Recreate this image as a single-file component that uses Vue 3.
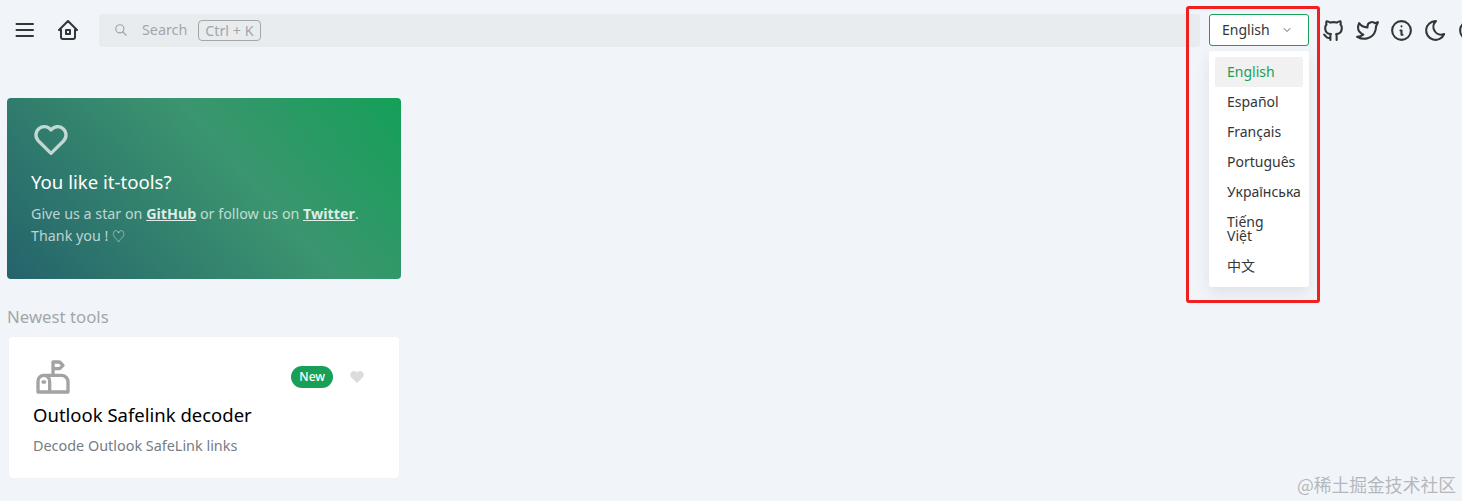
<script setup>
const languages = ["English", "Español", "Français", "Português", "Українська", "Tiếng Việt", "中文"];
</script>

<template>
  <div class="page">
    <header class="topbar">
      <button class="icon-btn">
        <svg width="24" height="24" viewBox="0 0 24 24" class="ico"><path d="M3.5 6h16.5M3.5 12h16.5M3.5 18h16.5" /></svg>
      </button>
      <button class="icon-btn">
        <svg width="24" height="24" viewBox="0 0 24 24" class="ico">
          <path d="M5 12l-2 0l9 -9l9 9l-2 0" />
          <path d="M5 12v7a2 2 0 0 0 2 2h10a2 2 0 0 0 2 -2v-7" />
          <path d="M10 12h4v4h-4z" />
        </svg>
      </button>
      <div class="search">
        <svg width="14" height="14" viewBox="0 0 24 24" class="ico search-ico"><circle cx="10" cy="10" r="7" /><path d="M21 21l-6 -6" /></svg>
        <span class="search-text">Search</span>
        <span class="kbd">Ctrl + K</span>
      </div>
      <div class="lang">
        <span>English</span>
        <svg width="12" height="12" viewBox="0 0 24 24" class="ico chevron"><path d="M6 9l6 6l6 -6" /></svg>
      </div>
      <div class="actions">
        <svg width="25" height="25" viewBox="0 0 24 24" class="ico">
          <path d="M9 19c-4.3 1.4 -4.3 -2.5 -6 -3m12 5v-3.5c0 -1 .1 -1.4 -.5 -2c2.8 -.3 5.5 -1.4 5.5 -6a4.6 4.6 0 0 0 -1.3 -3.2a4.2 4.2 0 0 0 -.1 -3.2s-1.1 -.3 -3.5 1.3a12.3 12.3 0 0 0 -6.2 0c-2.4 -1.6 -3.5 -1.3 -3.5 -1.3a4.2 4.2 0 0 0 -.1 3.2a4.6 4.6 0 0 0 -1.3 3.2c0 4.6 2.7 5.7 5.5 6c-.6 .6 -.6 1.2 -.5 2v3.5" />
        </svg>
        <svg width="25" height="25" viewBox="0 0 24 24" class="ico">
          <path d="M22 4.01c-1 .49 -1.98 .689 -3 .99c-1.121 -1.265 -2.783 -1.335 -4.38 -.737s-2.643 2.06 -2.62 3.737v1c-3.245 .083 -6.135 -1.395 -8 -4c0 0 -4.182 7.433 4 11c-1.872 1.247 -3.739 2.088 -6 2c3.308 1.803 6.913 2.423 10.034 1.517c3.58 -1.04 6.522 -3.723 7.651 -7.742a13.84 13.84 0 0 0 .497 -3.753c-.002 -.249 1.51 -2.772 1.818 -4.013z" />
        </svg>
        <svg width="25" height="25" viewBox="0 0 24 24" class="ico">
          <circle cx="12" cy="12" r="9" />
          <path d="M12 8h.01M11 12h1v4h1" />
        </svg>
        <svg width="25" height="25" viewBox="0 0 24 24" class="ico">
          <path d="M12 3c.132 0 .263 0 .393 0a7.5 7.5 0 0 0 7.92 12.446a9 9 0 1 1 -8.313 -12.454z" />
        </svg>
        <svg width="25" height="25" viewBox="0 0 24 24" class="ico">
          <circle cx="12" cy="12" r="9" />
        </svg>
      </div>
    </header>

    <main class="content">
      <section class="hero">
        <svg width="40" height="40" viewBox="0 0 24 24" class="hero-heart">
          <path d="M19.5 12.572l-7.5 7.428l-7.5 -7.428a5 5 0 1 1 7.5 -6.566a5 5 0 1 1 7.5 6.572" />
        </svg>
        <h2>You like it-tools?</h2>
        <p>
          Give us a star on <a>GitHub</a> or follow us on <a>Twitter</a>.<br />
          Thank you ! <span class="small-heart">♡</span>
        </p>
      </section>

      <h3 class="section-title">Newest tools</h3>

      <article class="tool">
        <div class="tool-top">
          <svg width="40" height="40" viewBox="0 0 24 24" class="mailbox">
            <path d="M10 21v-6.5a3.5 3.5 0 0 0 -7 0v6.5h18v-6a4 4 0 0 0 -4 -4h-10.5" />
            <path d="M12 11v-8h4l2 2l-2 2h-4" />
            <path d="M6 15h1" />
          </svg>
          <span class="badge">New</span>
          <svg width="18" height="18" viewBox="0 0 24 24" class="fav">
            <path d="M19.5 12.572l-7.5 7.428l-7.5 -7.428a5 5 0 1 1 7.5 -6.566a5 5 0 1 1 7.5 6.572" />
          </svg>
        </div>
        <div class="tool-name">Outlook Safelink decoder</div>
        <div class="tool-desc">Decode Outlook SafeLink links</div>
      </article>
    </main>

    <ul class="menu">
      <li v-for="(lang, i) in languages" :key="lang" :class="{ active: i === 0 }">{{ lang }}</li>
    </ul>
    <div class="red-box"></div>
    <div class="watermark">@稀土掘金技术社区</div>
  </div>
</template>

<style scoped>
.page {
  position: relative;
  width: 1462px;
  height: 501px;
  overflow: hidden;
  background: #f1f5f9;
  font-family: "Noto Sans", "Noto Sans CJK SC", sans-serif;
  color: #333639;
  font-size: 14px;
}
.topbar {
  display: flex;
  align-items: center;
  height: 60px;
  padding: 0 0 0 13px;
  box-sizing: border-box;
}
.icon-btn {
  display: flex;
  flex: none;
  padding: 0;
  border: 0;
  background: none;
  margin-right: 19px;
}
.ico {
  fill: none;
  stroke: #333639;
  stroke-width: 2;
  stroke-linecap: round;
  stroke-linejoin: round;
  flex: none;
}
.search {
  display: flex;
  flex: none;
  align-items: center;
  width: 1101px;
  height: 33px;
  padding-left: 15px;
  box-sizing: border-box;
  background: #e9ecef;
  border-radius: 3px;
  color: #a3a6a9;
}
.search-ico {
  stroke: #a3a6a9;
}
.search-text {
  margin: 0 0 1px 14px;
  font-size: 14.3px;
}
.kbd {
  margin-left: 11px;
  padding: 0 6px;
  border: 1px solid #a3a6a9;
  border-radius: 4px;
  line-height: 19px;
  font-size: 14.3px;
}
.lang {
  display: flex;
  flex: none;
  align-items: center;
  justify-content: space-between;
  width: 100px;
  height: 32px;
  margin-left: 9px;
  padding: 0 15px 1px 12px;
  box-sizing: border-box;
  background: #fff;
  border: 1px solid #18a058;
  border-radius: 3px;
}
.chevron {
  stroke: #5f6266;
}
.actions {
  display: flex;
  flex: none;
  gap: 9px;
  margin-left: 12px;
}
.content {
  padding: 38px 0 0 7px;
}
.hero {
  width: 394px;
  height: 181px;
  padding: 22px 24px 0;
  box-sizing: border-box;
  border-radius: 4px;
  background: linear-gradient(48deg, #25636c 0%, #3b956f 60%, #14a058 100%);
  color: #fff;
}
.hero-heart {
  display: block;
  fill: none;
  stroke: rgba(255, 255, 255, 0.7);
  stroke-width: 2;
  stroke-linecap: round;
  stroke-linejoin: round;
}
.hero h2 {
  margin: 7px 0 0;
  font-size: 18.6px;
  font-weight: 400;
  line-height: 30px;
}
.hero p {
  margin: 6px 0 0;
  font-size: 14.3px;
  line-height: 22px;
  color: rgba(255, 255, 255, 0.7);
}
.hero a {
  font-weight: 700;
  text-decoration: underline;
  color: rgba(255, 255, 255, 0.85);
}
.small-heart {
  font-size: 13px;
}
.section-title {
  margin: 26px 0 0;
  font-size: 16.8px;
  line-height: 24px;
  font-weight: 400;
  color: #a3a6a9;
}
.tool {
  width: 390px;
  height: 141px;
  margin: 8px 0 0 2px;
  padding: 20px 24px 0;
  box-sizing: border-box;
  background: #fff;
  border-radius: 3px;
  box-shadow: 0 0 1px rgba(0, 0, 0, 0.08);
}
.tool-top {
  display: flex;
  align-items: center;
  height: 40px;
}
.mailbox {
  fill: none;
  stroke: #a3a3a3;
  stroke-width: 2;
  stroke-linecap: round;
  stroke-linejoin: round;
  margin-right: auto;
}
.badge {
  height: 22px;
  padding: 0 8px;
  line-height: 21px;
  font-size: 12px;
  font-weight: 500;
  color: #fff;
  background: #18a058;
  border-radius: 11px;
}
.fav {
  margin: 0 9px 0 15px;
  fill: #dcdcdc;
}
.tool-name {
  margin-top: 4px;
  font-size: 18.5px;
  line-height: 28px;
  color: #000;
}
.tool-desc {
  margin-top: 7px;
  font-size: 14.4px;
  line-height: 20px;
  color: #767c82;
}
.menu {
  position: absolute;
  left: 1209px;
  top: 51px;
  width: 100px;
  margin: 0;
  padding: 6px;
  box-sizing: border-box;
  list-style: none;
  background: #fff;
  border-radius: 3px;
  box-shadow: 0 6px 16px rgba(0, 0, 0, 0.08);
}
.menu li {
  padding: 8px 12px;
  line-height: 14px;
  border-radius: 3px;
}
.menu li.active {
  color: #18a058;
  background: #f1f1f1;
}
.red-box {
  position: absolute;
  left: 1186px;
  top: 6px;
  width: 134px;
  height: 297px;
  box-sizing: border-box;
  border: 3px solid #f02020;
  border-radius: 3px;
}
.watermark {
  position: absolute;
  right: 6px;
  bottom: 5px;
  font-family: "Noto Sans CJK SC", sans-serif;
  font-size: 17.8px;
  line-height: 24px;
  color: #b4b8bc;
}
</style>
